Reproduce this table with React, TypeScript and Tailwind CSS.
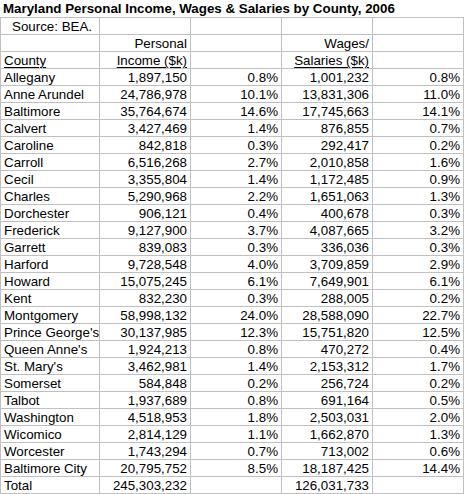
const rows: [string, string, string, string, string][] = [
  ['Allegany', '1,897,150', '0.8%', '1,001,232', '0.8%'],
  ['Anne Arundel', '24,786,978', '10.1%', '13,831,306', '11.0%'],
  ['Baltimore', '35,764,674', '14.6%', '17,745,663', '14.1%'],
  ['Calvert', '3,427,469', '1.4%', '876,855', '0.7%'],
  ['Caroline', '842,818', '0.3%', '292,417', '0.2%'],
  ['Carroll', '6,516,268', '2.7%', '2,010,858', '1.6%'],
  ['Cecil', '3,355,804', '1.4%', '1,172,485', '0.9%'],
  ['Charles', '5,290,968', '2.2%', '1,651,063', '1.3%'],
  ['Dorchester', '906,121', '0.4%', '400,678', '0.3%'],
  ['Frederick', '9,127,900', '3.7%', '4,087,665', '3.2%'],
  ['Garrett', '839,083', '0.3%', '336,036', '0.3%'],
  ['Harford', '9,728,548', '4.0%', '3,709,859', '2.9%'],
  ['Howard', '15,075,245', '6.1%', '7,649,901', '6.1%'],
  ['Kent', '832,230', '0.3%', '288,005', '0.2%'],
  ['Montgomery', '58,998,132', '24.0%', '28,588,090', '22.7%'],
  ["Prince George's", '30,137,985', '12.3%', '15,751,820', '12.5%'],
  ["Queen Anne's", '1,924,213', '0.8%', '470,272', '0.4%'],
  ["St. Mary's", '3,462,981', '1.4%', '2,153,312', '1.7%'],
  ['Somerset', '584,848', '0.2%', '256,724', '0.2%'],
  ['Talbot', '1,937,689', '0.8%', '691,164', '0.5%'],
  ['Washington', '4,518,953', '1.8%', '2,503,031', '2.0%'],
  ['Wicomico', '2,814,129', '1.1%', '1,662,870', '1.3%'],
  ['Worcester', '1,743,294', '0.7%', '713,002', '0.6%'],
  ['Baltimore City', '20,795,752', '8.5%', '18,187,425', '14.4%'],
  ['Total', '245,303,232', '', '126,031,733', ''],
]

// one spreadsheet row: county column + four numeric columns
function Row({ cells, underline = false }: { cells: React.ReactNode[]; underline?: boolean }) {
  return (
    <div className="flex h-[17px] border-b border-[#c0c0c0]">
      {cells.map((c, i) => (
        <div
          key={i}
          className={`flex h-full items-end overflow-hidden whitespace-nowrap border-r border-[#c0c0c0] leading-[15px] ${
            i === 0 ? 'w-[100px] border-l pl-[3px]' : 'w-[91px] justify-end pr-[3px]'
          } ${underline && c ? 'underline underline-offset-2' : ''}`}
        >
          {c}
        </div>
      ))}
    </div>
  )
}

export default function App() {
  return (
    <div className="w-[464px] bg-white text-[13.33px] text-black" style={{ fontFamily: '"Liberation Sans", Arial, sans-serif' }}>
      <div className="flex h-[18px] items-end border-b border-[#c0c0c0] pl-[3px] font-bold leading-[16px] whitespace-nowrap">
        Maryland Personal Income, Wages &amp; Salaries by County, 2006
      </div>
      <div className="flex h-[17px] border-b border-[#c0c0c0]">
        <div className="flex h-full w-[100px] items-end border-l border-r border-[#c0c0c0] pl-[11px] leading-[15px]">Source: BEA.</div>
        <div className="h-full w-[91px] border-r border-[#c0c0c0]" />
        <div className="h-full w-[91px] border-r border-[#c0c0c0]" />
        <div className="h-full w-[91px] border-r border-[#c0c0c0]" />
        <div className="h-full w-[91px] border-r border-[#c0c0c0]" />
      </div>
      <Row cells={['', 'Personal', '', 'Wages/', '']} />
      <Row cells={['County', 'Income ($k)', '', 'Salaries ($k)', '']} underline />
      {rows.map((r) => (
        <Row key={r[0]} cells={r} />
      ))}
    </div>
  )
}
